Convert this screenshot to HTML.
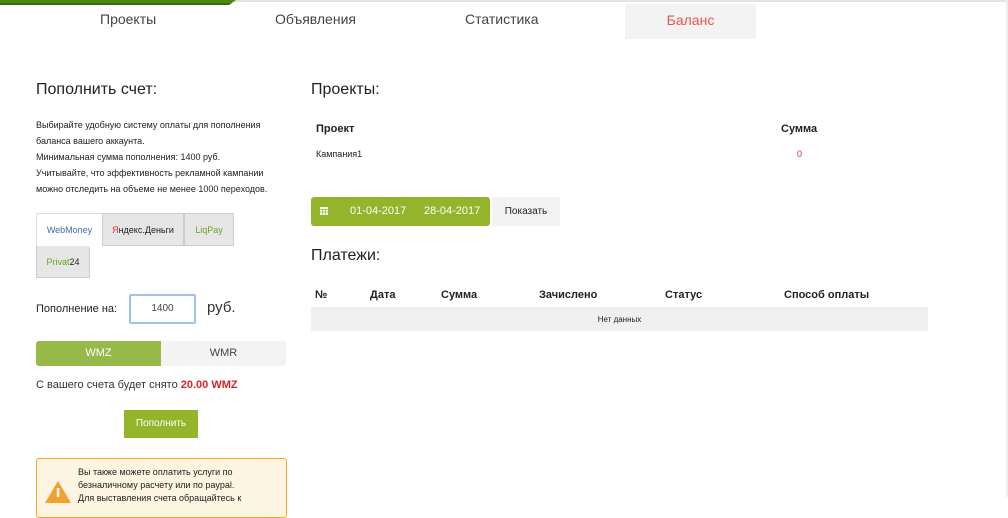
<!DOCTYPE html>
<html><head><meta charset="utf-8"><style>
*{margin:0;padding:0;box-sizing:border-box}
body{width:1008px;height:497px;overflow:hidden;background:#fff;font-family:"Liberation Sans","DejaVu Sans",sans-serif;color:#222;position:relative}
.a{position:absolute;white-space:nowrap}
.nav{font-size:14px;color:#444;top:11px}
.s{font-size:9px;line-height:16px;color:#222}
</style></head><body>
<div class="a" style="left:0;top:0;width:1008px;height:2px;background:#e4e4e4"></div>
<div class="a" style="left:1006px;top:0;width:2px;height:497px;background:#eee"></div>
<div class="a" style="left:0;top:0;width:236px;height:5px;background:#4f8a10;border-bottom:2px solid #3d6a0c;clip-path:polygon(0 0,100% 0,97% 100%,0 100%)"></div>
<div class="a nav" style="left:100px">Проекты</div>
<div class="a nav" style="left:275px">Объявления</div>
<div class="a nav" style="left:465px">Статистика</div>
<div class="a" style="left:625px;top:4px;width:131px;height:35px;background:#f3f3f3;color:#e9534f;font-size:14px;text-align:center;line-height:33px">Баланс</div>

<div class="a" style="left:36px;top:81px;font-size:16px">Пополнить счет:</div>
<div class="a s" style="left:36px;top:117px">Выбирайте удобную систему оплаты для пополнения<br>баланса вашего аккаунта.<br>Минимальная сумма пополнения: 1400 руб.<br>Учитывайте, что эффективность рекламной кампании<br>можно отследить на объеме не менее 1000 переходов.</div>

<div class="a" style="left:36px;top:213px;width:67px;height:33px;border:1px solid #ddd;border-bottom:none;background:#fff;font-size:9px;color:#3a6cae;text-align:center;line-height:32px">WebMoney</div>
<div class="a" style="left:102px;top:213px;width:82px;height:33px;border:1px solid #ccc;background:#e6e6e6;font-size:9px;text-align:center;line-height:32px"><span style="color:#e33">Я</span>ндекс.Деньги</div>
<div class="a" style="left:184px;top:213px;width:50px;height:33px;border:1px solid #ccc;background:#e6e6e6;font-size:9px;color:#6aa322;text-align:center;line-height:32px">LiqPay</div>
<div class="a" style="left:36px;top:246px;width:54px;height:32px;border:1px solid #ccc;border-top:none;background:#e6e6e6;font-size:9px;text-align:center;line-height:32px;border-radius:0 3px 0 0"><span style="color:#6aa322">Privat</span>24</div>

<div class="a" style="left:36px;top:303px;font-size:11px">Пополнение на:</div>
<div class="a" style="left:129px;top:294px;width:67px;height:30px;border:2px solid #9ec2f0;border-radius:2px;font-size:10px;text-align:center;line-height:26px;color:#444">1400</div>
<div class="a" style="left:207px;top:299px;font-size:15px;color:#333">руб.</div>

<div class="a" style="left:36px;top:341px;width:250px;height:25px;background:#f3f3f3;border-radius:3px"></div>
<div class="a" style="left:36px;top:341px;width:125px;height:25px;background:#97b94a;border-radius:3px 0 0 3px;color:#fff;font-size:11px;text-align:center;line-height:25px">WMZ</div>
<div class="a" style="left:161px;top:341px;width:125px;height:25px;color:#444;font-size:11px;text-align:center;line-height:25px">WMR</div>

<div class="a" style="left:36px;top:379px;font-size:11px;color:#333">С вашего счета будет снято <b style="color:#d8232a">20.00 WMZ</b></div>
<div class="a" style="left:124px;top:410px;width:74px;height:28px;background:#92b52b;color:#fff;font-size:10px;text-align:center;line-height:28px">Пополнить</div>

<div class="a" style="left:36px;top:458px;width:251px;height:60px;border:1px solid #f5a623;border-radius:3px;background:#fdf4e1"></div>
<svg class="a" style="left:45px;top:481px" width="26" height="22"><polygon points="13,0 26,22 0,22" fill="#f2a22c"/><rect x="11.8" y="7" width="2.5" height="9" fill="#fff"/></svg>
<div class="a" style="left:78px;top:466px;font-size:9px;line-height:13px">Вы также можете оплатить услуги по<br>безналичному расчету или по paypal.<br>Для выставления счета обращайтесь к</div>

<div class="a" style="left:311px;top:81px;font-size:16px">Проекты:</div>
<div class="a" style="left:316px;top:123px;font-size:11px;font-weight:bold">Проект</div>
<div class="a" style="left:781px;top:123px;font-size:11px;font-weight:bold">Сумма</div>
<div class="a" style="left:316px;top:149px;font-size:9px">Кампания1</div>
<div class="a" style="left:797px;top:149px;font-size:9px;color:#d8232a">0</div>

<div class="a" style="left:311px;top:197px;width:179px;height:29px;background:#92b52b;border-radius:3px;color:#fff;font-size:11px;line-height:29px"><svg style="position:absolute;left:9px;top:10px" width="8" height="8"><rect width="8" height="8" fill="#fff"/><path d="M0 2.5H8M0 5H8M2.7 2.5V8M5.3 2.5V8" stroke="#92b52b" stroke-width=".8"/></svg><span style="position:absolute;left:39px">01-04-2017</span><span style="position:absolute;left:113px">28-04-2017</span></div>
<div class="a" style="left:492px;top:197px;width:68px;height:29px;background:#f3f3f3;font-size:10px;text-align:center;line-height:29px">Показать</div>

<div class="a" style="left:311px;top:247px;font-size:16px">Платежи:</div>
<div class="a" style="left:315px;top:289px;font-size:11px;font-weight:bold">№</div>
<div class="a" style="left:370px;top:289px;font-size:11px;font-weight:bold">Дата</div>
<div class="a" style="left:441px;top:289px;font-size:11px;font-weight:bold">Сумма</div>
<div class="a" style="left:539px;top:289px;font-size:11px;font-weight:bold">Зачислено</div>
<div class="a" style="left:665px;top:289px;font-size:11px;font-weight:bold">Статус</div>
<div class="a" style="left:784px;top:289px;font-size:11px;font-weight:bold">Способ оплаты</div>
<div class="a" style="left:311px;top:307px;width:617px;height:24px;background:#f0f0f0;font-size:8px;text-align:center;line-height:26px">Нет данных</div>
</body></html>
